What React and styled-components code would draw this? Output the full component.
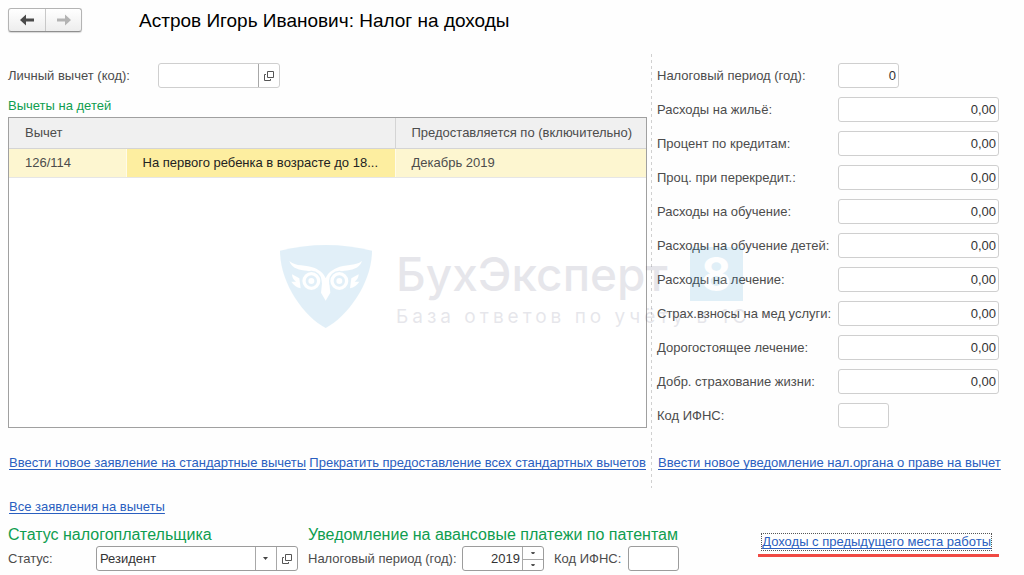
import React, { useState } from "react"
import styled, { createGlobalStyle } from "styled-components"

const GlobalStyle = createGlobalStyle`
  * {
    box-sizing: border-box;
  }

  body {
    margin: 0;
    background: #fefefe;
    color: #4c4c4c;
    font-family: "Liberation Sans", Arial, sans-serif;
    font-size: 13px;
    line-height: 16px;
  }

  input, select, button {
    font: inherit;
    color: inherit;
  }
`

const Page = styled.div`
  padding: 8px 25px 4px 8px;
`

const Header = styled.header`
  display: flex;
  align-items: flex-start;
  gap: 57px;
  height: 26px;
`

const NavGroup = styled.div`
  display: flex;
  height: 24px;
  border: 1px solid #b4b4b4;
  border-bottom-color: #8f8f8f;
  border-radius: 3px;
  background: linear-gradient(#ffffff, #ededed);
  box-shadow: 0 1px 1px #d8d8d8;
`

const NavButton = styled.button`
  display: flex;
  align-items: center;
  justify-content: center;
  width: 36px;
  padding: 0;
  border: 0;
  background: none;
  color: ${props => (props.disabled ? "#b3b3b3" : "#4a4a4a")};

  & + & {
    border-left: 1px solid #c8c8c8;
  }
`

const Title = styled.h1`
  margin: 0;
  color: #000;
  font-size: 19px;
  font-weight: 400;
  line-height: 26px;
`

const Main = styled.main`
  position: relative;
  display: grid;
  grid-template-columns: minmax(0, 1fr) 1px 342px;
  column-gap: 5px;
  margin-top: 20px;
`

const Divider = styled.div`
  background: repeating-linear-gradient(#d0d0d0 0 3px, transparent 3px 6px);
`

const Column = styled.section`
  display: flex;
  flex-direction: column;
  padding: 9px 0 17px;
`

const FieldRow = styled.div`
  display: grid;
  grid-template-columns: ${props => props.$label}px auto;
  justify-content: start;
  align-items: center;
`

const FieldList = styled.div`
  display: grid;
  gap: 9px;
`

const Field = styled.input`
  width: ${props => props.$width}px;
  height: 25px;
  padding: 0 2px;
  border: 1px solid ${props => (props.$dark ? "#9c9c9c" : "#cfcfcf")};
  border-radius: 3px;
  background: #fff;
  color: #333;
  text-align: right;
  outline: 0;
`

const Combo = styled.div`
  display: flex;
  width: ${props => props.$width}px;
  height: 25px;
  border: 1px solid ${props => (props.$dark ? "#9c9c9c" : "#cfcfcf")};
  border-radius: 3px;
  background: #fff;
  color: #333;
`

const ComboInput = styled.input`
  flex: 1;
  min-width: 0;
  padding: 0 2px;
  border: 0;
  background: none;
  text-align: right;
  outline: 0;
`

const SelectBox = styled.div`
  display: grid;
  flex: 1;
  grid-template-columns: 1fr 21px;

  svg {
    grid-area: 1 / 2;
    place-self: center;
    pointer-events: none;
  }
`

const Select = styled.select`
  grid-area: 1 / 1 / 2 / 3;
  padding: 0 3px;
  border: 0;
  background: linear-gradient(#a8a8a8, #a8a8a8) right 20px top / 1px 100% no-repeat;
  appearance: none;
  outline: 0;
`

const ComboButton = styled.button`
  display: flex;
  align-items: center;
  justify-content: center;
  width: 21px;
  padding: 0;
  border: 0;
  border-left: 1px solid #a8a8a8;
  background: none;
`

const Spinner = styled.div`
  display: grid;
  grid-template-rows: 1fr 1fr;
  width: 21px;
  border-left: 1px solid #a8a8a8;
`

const SpinButton = styled.button`
  display: flex;
  align-items: center;
  justify-content: center;
  padding: 0;
  border: 0;
  background: none;

  & + & {
    border-top: 1px solid #a8a8a8;
  }
`

const Caption = styled.h2`
  margin: 10px 0 3px;
  color: #0f9d4f;
  font-size: 13px;
  font-weight: 400;
  line-height: 16px;
`

const TableBox = styled.div`
  flex: 1;
  margin-right: -1px;
  border: 1px solid #a0a0a0;
  background: #fff;
`

const Table = styled.table`
  width: 100%;
  border-collapse: collapse;
  table-layout: fixed;
`

const HeadCell = styled.th`
  height: 30px;
  padding: 0 16px;
  border-bottom: 1px solid #d4d4d4;
  background: #f0f0f0;
  font-weight: 400;
  text-align: left;
  white-space: nowrap;

  & + & {
    padding-right: 0;
    border-left: 1px solid #d4d4d4;
  }
`

const Cell = styled.td`
  height: 29px;
  padding: 0 8px 0 16px;
  border-bottom: 1px solid #e6e6e6;
  background: ${props => (props.$active ? "#fdeea0" : "#fdf6d0")};
  color: ${props => (props.$active ? "#222" : "#4c4c4c")};
  overflow: hidden;
  text-overflow: ellipsis;
  white-space: nowrap;

  & + & {
    border-left: 1px solid #fffbe8;
  }
`

const Links = styled.nav`
  display: flex;
  justify-content: space-between;
  margin-top: 27px;
  padding-left: 1px;
  white-space: nowrap;
`

const TextLink = styled.a`
  color: #2a5fc0;
  text-decoration: underline;
  text-decoration-skip-ink: none;
  text-underline-offset: 2px;
`

const AllLinks = styled.nav`
  margin-top: 11px;
  padding-left: 1px;
`

const Footer = styled.footer`
  display: flex;
  gap: 10px;
  margin-top: 9px;
`

const Group = styled.section`
  flex: none;
`

const GroupTitle = styled.h2`
  margin: 0;
  color: #0f9d4f;
  font-size: 16px;
  font-weight: 400;
  line-height: 22px;
`

const InlineFields = styled.div`
  display: flex;
  gap: 10px;
`

const Marked = styled.div`
  align-self: flex-start;
  margin: 10px 0 0 auto;
  padding: 0 8px 4px 4px;
  border-bottom: 3px solid #f04a43;
  white-space: nowrap;

  a {
    display: block;
    outline: 1px dotted #555;
  }
`

// lies over both columns of the form
const Watermark = styled.div`
  position: absolute;
  top: 191px;
  left: 272px;
  display: flex;
  gap: 24px;
  opacity: 0.12;
  color: #3a3a60;
  font-family: Inter, sans-serif;
  pointer-events: none;
  white-space: nowrap;
`

const Brand = styled.div`
  display: flex;
  align-items: center;
  gap: 22px;
  height: 54px;
  margin-top: 2px;
  font-size: 46px;
  font-weight: 500;
  line-height: 54px;
`

const Eight = styled.span`
  width: 53px;
  background: #1286c9;
  color: #fff;
  font-weight: 700;
  text-align: center;
`

const Tagline = styled.div`
  font-size: 19px;
  line-height: 32px;
  letter-spacing: 4px;
`

const Arrow = ({ back }) => (
  <svg width="14" height="12" viewBox="0 0 14 12" fill="currentColor">
    <path d={back ? "M0 6 6 0.5v4h8v3H6v4z" : "M14 6 8 0.5v4H0v3h8v4z"} />
  </svg>
)

const OpenIcon = () => (
  <svg width="10" height="10" viewBox="0 0 10 10" fill="none" stroke="#555">
    <path d="M3.5.5h6v6h-6zM2 3.5H.5v6h6V8" />
  </svg>
)

const Caret = () => (
  <svg width="5" height="3" viewBox="0 0 5 3" fill="#444">
    <path d="M0 0h5L2.5 3z" />
  </svg>
)

const SpinMark = () => (
  <svg width="4" height="2" viewBox="0 0 4 2" fill="#555">
    <path d="M0 0h4L3 2H1z" />
  </svg>
)

const Owl = () => (
  <svg width="92" height="83" viewBox="0 0 276 249">
    <path fill="#1286c9" d="M0 17Q138-17 276 17C276 112 205 212 137 249 68 212 0 112 0 17z" />
    <g fill="#fff">
      <path d="M28 48C46 66 80 58 104 69c18 8 28 18 33 31 5-13 15-23 33-31 24-11 56-5 76-21-8 24-32 27-52 29-24 3-42 18-46 38l3 28-14 24-14-24 3-28c-4-20-22-35-46-38-20-2-44-5-52-29z" />
      <path d="M36 88l22 12 4 30C50 128 40 120 34 110l14 0C40 104 36 96 36 88zM236 88l-22 12-4 30c12-2 22-10 28-20l-14 0c8-6 12-14 12-22z" />
    </g>
    <g fill="#fff" stroke="#1286c9" strokeWidth="4">
      <circle cx="94" cy="108" r="29" />
      <circle cx="178" cy="108" r="29" />
    </g>
    <g fill="#fff" stroke="#1286c9" strokeWidth="8">
      <circle cx="94" cy="108" r="13" />
      <circle cx="178" cy="108" r="13" />
    </g>
  </svg>
)

const amounts = [
  { id: "housing", label: "Расходы на жильё:" },
  { id: "credit", label: "Процент по кредитам:" },
  { id: "recredit", label: "Проц. при перекредит.:" },
  { id: "study", label: "Расходы на обучение:" },
  { id: "childStudy", label: "Расходы на обучение детей:" },
  { id: "treatment", label: "Расходы на лечение:" },
  { id: "medInsurance", label: "Страх.взносы на мед услуги:" },
  { id: "expensive", label: "Дорогостоящее лечение:" },
  { id: "life", label: "Добр. страхование жизни:" },
]

const App = () => {
  const [year, setYear] = useState(2019)

  return (
    <Page>
      <GlobalStyle />
      <Header>
        <NavGroup>
          <NavButton type="button" aria-label="Назад"><Arrow back /></NavButton>
          <NavButton type="button" aria-label="Вперед" disabled><Arrow /></NavButton>
        </NavGroup>
        <Title>Астров Игорь Иванович: Налог на доходы</Title>
      </Header>

      <Main>
        <Column>
          <FieldRow $label={150}>
            <label htmlFor="personal">Личный вычет (код):</label>
            <Combo $width={122}>
              <ComboInput id="personal" />
              <ComboButton type="button" aria-label="Открыть"><OpenIcon /></ComboButton>
            </Combo>
          </FieldRow>
          <Caption>Вычеты на детей</Caption>
          <TableBox>
            <Table>
              <colgroup>
                <col width="117" />
                <col />
                <col width="251" />
              </colgroup>
              <thead>
                <tr>
                  <HeadCell colSpan={2}>Вычет</HeadCell>
                  <HeadCell>Предоставляется по (включительно)</HeadCell>
                </tr>
              </thead>
              <tbody>
                <tr>
                  <Cell>126/114</Cell>
                  <Cell $active>На первого ребенка в возрасте до 18...</Cell>
                  <Cell>Декабрь 2019</Cell>
                </tr>
              </tbody>
            </Table>
          </TableBox>
          <Links>
            <TextLink href="#new">Ввести новое заявление на стандартные вычеты</TextLink>
            <TextLink href="#stop">Прекратить предоставление всех стандартных вычетов</TextLink>
          </Links>
        </Column>

        <Divider />

        <Column>
          <FieldList>
            <FieldRow $label={181}>
              <label htmlFor="taxYear">Налоговый период (год):</label>
              <Field id="taxYear" $width={61} defaultValue="0" />
            </FieldRow>
            {amounts.map(item => (
              <FieldRow key={item.id} $label={181}>
                <label htmlFor={item.id}>{item.label}</label>
                <Field id={item.id} $width={161} defaultValue="0,00" />
              </FieldRow>
            ))}
            <FieldRow $label={181}>
              <label htmlFor="ifns">Код ИФНС:</label>
              <Field id="ifns" $width={51} />
            </FieldRow>
          </FieldList>
          <Links>
            <TextLink href="#notice">Ввести новое уведомление нал.органа о праве на вычет</TextLink>
          </Links>
        </Column>

        <Watermark>
          <Owl />
          <div>
            <Brand>БухЭксперт<Eight>8</Eight></Brand>
            <Tagline>База ответов по учёту в 1С</Tagline>
          </div>
        </Watermark>
      </Main>

      <AllLinks>
        <TextLink href="#all">Все заявления на вычеты</TextLink>
      </AllLinks>

      <Footer>
        <Group>
          <GroupTitle>Статус налогоплательщика</GroupTitle>
          <FieldRow $label={88}>
            <label htmlFor="status">Статус:</label>
            <Combo $width={202} $dark>
              <SelectBox>
                <Select id="status" defaultValue="Резидент">
                  <option>Резидент</option>
                  <option>Нерезидент</option>
                </Select>
                <Caret />
              </SelectBox>
              <ComboButton type="button" aria-label="Открыть статус"><OpenIcon /></ComboButton>
            </Combo>
          </FieldRow>
        </Group>
        <Group>
          <GroupTitle>Уведомление на авансовые платежи по патентам</GroupTitle>
          <InlineFields>
            <FieldRow $label={154}>
              <label htmlFor="patentYear">Налоговый период (год):</label>
              <Combo $width={82} $dark>
                <ComboInput id="patentYear" value={year} onChange={e => setYear(Number(e.target.value) || 0)} />
                <Spinner>
                  <SpinButton type="button" aria-label="Больше" onClick={() => setYear(year + 1)}><SpinMark /></SpinButton>
                  <SpinButton type="button" aria-label="Меньше" onClick={() => setYear(year - 1)}><SpinMark /></SpinButton>
                </Spinner>
              </Combo>
            </FieldRow>
            <FieldRow $label={74}>
              <label htmlFor="patentIfns">Код ИФНС:</label>
              <Field id="patentIfns" $width={51} $dark />
            </FieldRow>
          </InlineFields>
        </Group>
        <Marked>
          <TextLink href="#previous">Доходы с предыдущего места работы</TextLink>
        </Marked>
      </Footer>
    </Page>
  )
}

export default App
